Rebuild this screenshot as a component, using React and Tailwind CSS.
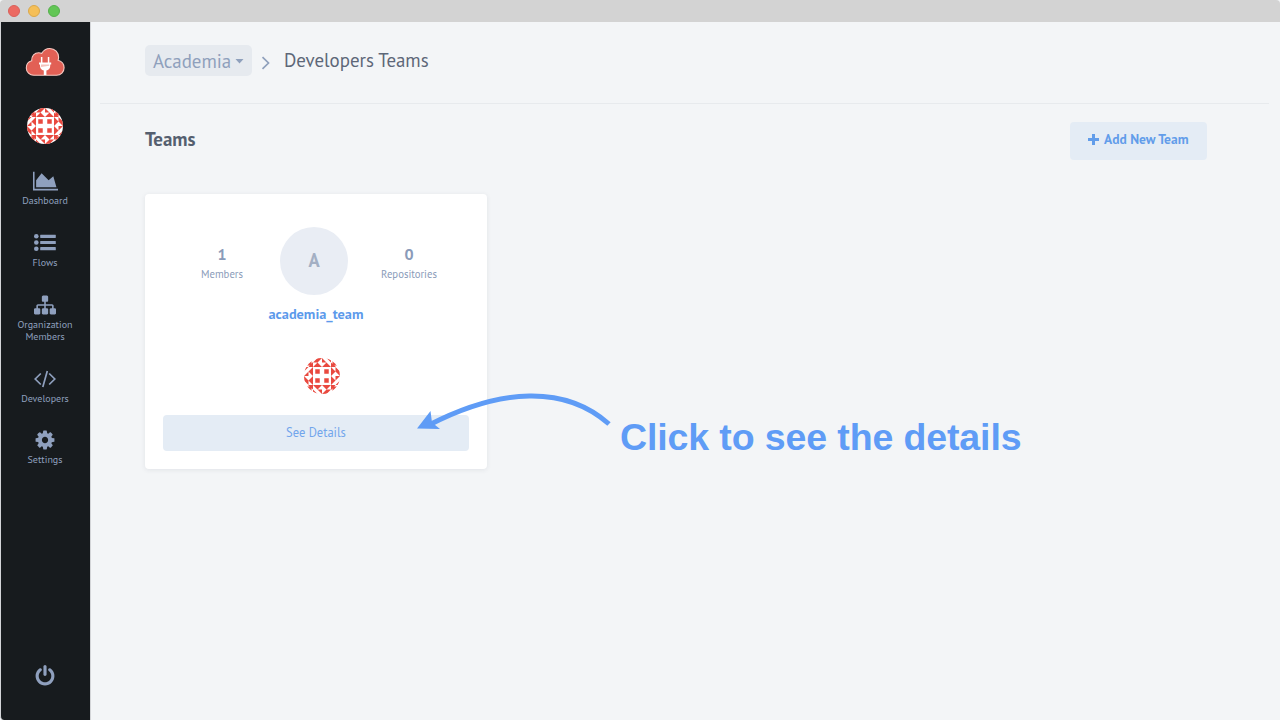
import React from "react";

const COG =
  "M1152 896q0-106-75-181t-181-75-181 75-75 181 75 181 181 75 181-75 75-181zm512-109v222q0 12-8 23t-20 13l-185 28q-19 54-39 91 35 50 107 138 10 12 10 25t-9 23q-27 37-99 108t-94 71q-12 0-26-9l-138-108q-44 23-91 38-16 136-29 186-7 28-36 28h-222q-14 0-24.5-8.5t-11.5-21.5l-28-184q-49-16-90-37l-141 107q-10 9-25 9-14 0-25-11-126-114-165-168-7-10-7-23 0-12 8-23 15-21 51-66.5t54-70.5q-27-50-41-99l-183-27q-13-2-21-12.5t-8-23.5v-222q0-12 8-23t19-13l186-28q14-46 39-92-40-57-107-138-10-12-10-24 0-10 9-23 26-36 98.5-107.5t94.5-71.5q13 0 26 10l138 107q44-23 91-38 16-136 29-186 7-28 36-28h222q14 0 24.5 8.5t11.5 21.5l28 184q49 16 90 37l142-107q9-9 24-9 13 0 25 10 129 119 165 170 7 8 7 22 0 12-8 23-15 21-51 66.5t-54 70.5q26 50 41 98l183 28q13 2 21 12.5t8 23.5z";
const SITEMAP =
  "M1792 1248v320q0 40-28 68t-68 28h-320q-40 0-68-28t-28-68v-320q0-40 28-68t68-28h96v-192h-512v192h96q40 0 68 28t28 68v320q0 40-28 68t-68 28h-320q-40 0-68-28t-28-68v-320q0-40 28-68t68-28h96v-192h-512v192h96q40 0 68 28t28 68v320q0 40-28 68t-68 28h-320q-40 0-68-28t-28-68v-320q0-40 28-68t68-28h96v-192q0-52 38-90t90-38h512v-192h-96q-40 0-68-28t-28-68v-320q0-40 28-68t68-28h320q40 0 68 28t28 68v320q0 40-28 68t-68 28h-96v192h512q52 0 90 38t38 90v192h96q40 0 68 28t28 68z";
const POWER =
  "M1664 896q0 156-61 298t-164 245-245 164-298 61-298-61-245-164-164-245-61-298q0-182 80.5-343t226.5-270q43-32 95.5-25t83.5 50q32 42 24.5 94.5t-49.5 84.5q-98 74-151.5 181t-53.5 228q0 104 40.5 198.5t109.5 163.5 163.5 109.5 198.5 40.5 198.5-40.5 163.5-109.5 109.5-163.5 40.5-198.5q0-121-53.5-228t-151.5-181q-42-32-49.5-84.5t24.5-94.5q31-43 84-50t95 25q146 109 226.5 270t80.5 343zm-640-768v640q0 52-38 90t-90 38-90-38-38-90v-640q0-52 38-90t90-38 90 38 38 90z";

function Glyph({ d, wide }) {
  return (
    <svg
      viewBox={wide ? "0 0 2048 1792" : "0 0 1792 1792"}
      className={wide ? "h-[22px] w-[25px]" : "h-[22px] w-[22px]"}
      fill="currentColor"
    >
      <path d={d} />
    </svg>
  );
}

function ListGlyph() {
  return (
    <svg viewBox="0 0 22 22" className="h-[22px] w-[22px]" fill="currentColor">
      {[4.3, 10.5, 16.7].map((y) => (
        <g key={y}>
          <circle cx="2.3" cy={y} r="2.3" />
          <rect x="6.2" y={y - 1.6} width="15.6" height="3.2" rx="0.4" />
        </g>
      ))}
    </svg>
  );
}

function CodeGlyph() {
  return (
    <svg viewBox="0 0 22 22" className="h-[22px] w-[22px]" fill="none" stroke="currentColor" strokeWidth="1.7">
      <path d="M6.800 5.500L1.200 11L6.800 16.500M15.200 5.500l5.600 5.500l-5.600 5.500M13.300 3L8.800 19" />
    </svg>
  );
}

function Logo() {
  return (
    <svg viewBox="0 0 40 30" className="h-[30px] w-[40px]">
      <path
        d="M8.8 28.3C4.700 28.300 1.300 25 1.300 20.900C1.300 17.300 3.600 14.700 6.700 13.800C6.300 8.900 9.700 5.700 13.700 5.700C14.900 5.700 15.900 6 16.700 6.400C18.500 3.300 21.300 1.500 24.700 1.500C30.200 1.500 33.600 5.800 33.600 10.300C33.600 11.500 33.400 12.400 33.100 13.200C36.700 14.200 39.100 17.200 39.100 20.800C39.100 25 35.800 28.300 31.600 28.300Z"
        fill="#e26055"
        stroke="#f6c9c2"
        strokeWidth="1.1"
      />
      <rect x="15.900" y="10" width="1.500" height="6" fill="#fff" />
      <rect x="22.800" y="10" width="1.500" height="6" fill="#fff" />
      <path d="M14 15.500h12.200v2h-1v1.500c0 2.500-1.600 4-3.800 4.400V28h-2.600v-4.600C16.600 23 15 21.500 15 19v-1.500h-1z" fill="#fff" />
      <path d="M16 17.500h8.200v1.300l-8.200 1.200z" fill="#f3c3bd" />
    </svg>
  );
}

function Identicon({ id, className }) {
  return (
    <svg viewBox="0 0 36 36" className={className}>
      <clipPath id={id}>
        <circle cx="18" cy="18" r="18" />
      </clipPath>
      <g clipPath={`url(#${id})`}>
        <rect width="36" height="36" fill="#fff" />
        <g fill="#e9493f">
          {[0, 90, 180, 270].map((a) => (
            <g key={a} transform={`rotate(${a} 18 18)`}>
              <path d="M2 7.500L7.500 2v5.500zM4.500 9l4.500-5V9z" />
              <path transform="translate(9 0)" d="M0 9l4.500-4.500L9 9zM0 4.500L4.500 0H9L4.500 4.500z" />
              <path transform="translate(18 0)" d="M0 9l4.500-4.500L9 9zM0 4.500V0l4.500 4.500zM4.500 0L9 4.500V0z" />
              <rect x="11.250" y="11.250" width="4.500" height="4.500" />
            </g>
          ))}
        </g>
      </g>
    </svg>
  );
}

function NavItem({ icon, label, className }) {
  return (
    <div className={"flex flex-col items-center " + className}>
      {icon}
      <span className="mt-[3px] text-center text-[10px] leading-[12px] whitespace-pre-line">{label}</span>
    </div>
  );
}

function Stat({ value, label, className }) {
  return (
    <div className={"flex flex-col items-center text-[#8a9bb9] " + className}>
      <span className="text-[16px] leading-[20px] font-semibold">{value}</span>
      <span className="mt-[4px] text-[10.700px] leading-[12px]">{label}</span>
    </div>
  );
}

export default function App() {
  return (
    <div className="relative flex h-[720px] w-[1280px] flex-col overflow-hidden bg-[#f3f5f7] font-['PT_Sans','Noto_Sans',sans-serif] font-stretch-90%">
      <div className="flex h-[22px] shrink-0 items-center gap-[8px] rounded-t-[4px] bg-[#d3d3d3] pl-[8px]">
        <span className="h-[12px] w-[12px] rounded-full border border-[#d9605a] bg-[#ec6a62]" />
        <span className="h-[12px] w-[12px] rounded-full border border-[#dba84a] bg-[#f5bf58]" />
        <span className="h-[12px] w-[12px] rounded-full border border-[#55b04c] bg-[#62c655]" />
      </div>

      <div className="flex flex-1">
        <aside className="flex w-[91px] shrink-0 flex-col items-center rounded-bl-[4px] border-x border-[#d3d5d8] bg-[#171b1e] pr-px text-[#8fa0be]">
          <div className="mt-[25px] h-[30px]">
            <Logo />
          </div>
          <Identicon id="side-avatar" className="mt-[31px] h-[36px] w-[36px]" />
          <NavItem
            className="mt-[26px] h-[62px]"
            icon={<Glyph wide d="M2048 1536v128h-2048v-1536h128v1408h1920zm-384-1024l256 896h-1664v-576l448-576 576 576z" />}
            label="Dashboard"
          />
          <NavItem className="h-[62px]" icon={<ListGlyph />} label="Flows" />
          <NavItem className="h-[74px]" icon={<Glyph d={SITEMAP} />} label={"Organization\nMembers"} />
          <NavItem className="h-[61px]" icon={<CodeGlyph />} label="Developers" />
          <NavItem className="h-[62px]" icon={<Glyph d={COG} />} label="Settings" />
          <div className="mt-auto mb-[33px]">
            <Glyph d={POWER} />
          </div>
        </aside>

        <main className="flex flex-1 flex-col pr-[11px] pl-[9px]">
          <header className="flex h-[82px] items-start border-b border-[#e7eaed] pl-[45px]">
            <button className="mt-[23px] flex h-[31px] w-[107px] items-center rounded-[5px] bg-[#e6eaef] pl-[8px] text-[#8fa0bc]">
              <span className="w-[78px] text-left text-[18.900px] leading-[30px]">Academia</span>
              <svg viewBox="0 0 8 5" className="mt-[2px] ml-[4px] h-[5px] w-[9px]" fill="currentColor">
                <path d="M0 0h8L4 4.500z" />
              </svg>
            </button>
            <svg viewBox="0 0 9 14" className="mt-[34px] ml-[9px] h-[14px] w-[9px]" fill="none" stroke="#8fa0bc" strokeWidth="1.700">
              <path d="M1.500 1.200L7.500 7L1.500 12.800" />
            </svg>
            <h1 className="mt-[23px] ml-[14px] text-[18.900px] leading-[30px] text-[#5d6778]">Developers Teams</h1>
          </header>

          <div className="flex h-[90px] items-start justify-between pr-[62px] pl-[45px]">
            <h2 className="mt-[20px] text-[18.900px] leading-[30px] font-bold text-[#555f6f]">Teams</h2>
            <button className="mt-[18px] flex h-[38px] w-[137px] items-center rounded-[4px] bg-[#e4ecf5] pb-[2px] pl-[18px] text-[#629dea]">
              <svg viewBox="0 0 11 11" className="mb-[2px] h-[11px] w-[11px]" fill="currentColor">
                <path d="M4 0h3v4h4v3H7v4H4V7H0V4h4z" />
              </svg>
              <span className="mb-[2px] ml-[5px] text-[13.500px] leading-[20px] font-bold whitespace-nowrap">Add New Team</span>
            </button>
          </div>

          <section className="ml-[45px] flex h-[275px] w-[342px] flex-col items-center rounded-[4px] bg-white px-[18px] shadow-[0_1px_5px_rgba(40,60,80,0.09)]">
            <div className="mt-[33px] flex h-[68px] w-full items-start">
              <Stat className="mt-[17px] ml-[19px] w-[80px]" value="1" label="Members" />
              <div className="ml-[18px] flex h-[68px] w-[68px] items-center justify-center rounded-full bg-[#e9edf4] text-[18.500px] font-bold text-[#a3afc3]">
                A
              </div>
              <Stat className="mt-[17px] ml-[21px] w-[80px]" value="0" label="Repositories" />
            </div>
            <div className="mt-[9px] text-[14.300px] leading-[20px] font-bold text-[#5c9aeb]">academia_team</div>
            <Identicon id="card-avatar" className="mt-[34px] ml-[12px] h-[36px] w-[36px]" />
            <button className="mt-[21px] h-[36px] w-full rounded-[4px] bg-[#e4ecf5] pb-[2px] text-[12.500px] text-[#71a5ec]">
              See Details
            </button>
          </section>
        </main>
      </div>

      <svg viewBox="0 0 210 50" className="absolute top-[385px] left-[410px] h-[50px] w-[210px]">
        <path d="M19 40C91 3 155 0 199 39" fill="none" stroke="#5f9cf6" strokeWidth="5" />
        <path d="M7 43.500L20.500 26l1.500 11.500L30 44z" fill="#5f9cf6" />
      </svg>
      <div className="absolute top-[416px] left-[620px] font-['Liberation_Sans',sans-serif] text-[37.500px] leading-[43px] font-bold tracking-[-0.120px] whitespace-nowrap text-[#5f9cf6]">
        Click to see the details
      </div>
    </div>
  );
}
